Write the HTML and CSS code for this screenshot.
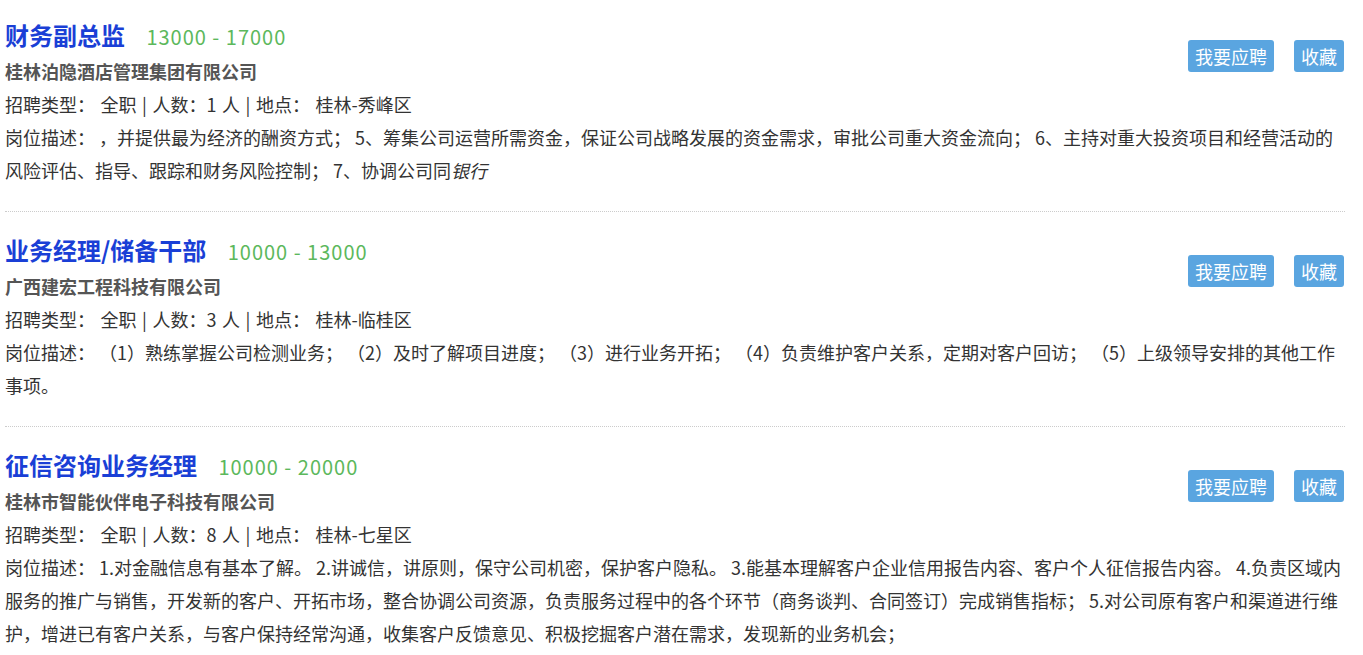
FILE: index.html
```html
<!DOCTYPE html>
<html lang="zh-CN">

<head>
    <meta charset="UTF-8">
    <meta name="viewport" content="width=device-width, initial-scale=1.0">
    <title>职位列表</title>
    <link rel="stylesheet" href="styles.css">
</head>

<body>
    <div class="job-list">
        <div class="job">
            <div class="actions">
                <a class="btn" href="#">我要应聘</a>
                <a class="btn" href="#">收藏</a>
            </div>
            <div class="job-title">
                <a href="#">财务副总监</a>
                <span class="salary">13000 - 17000</span>
            </div>
            <div class="company">桂林泊隐酒店管理集团有限公司</div>
            <div class="meta">招聘类型： 全职 | 人数：1 人 | 地点： 桂林-秀峰区</div>
            <div class="desc">岗位描述： ，并提供最为经济的酬资方式； 5、筹集公司运营所需资金，保证公司战略发展的资金需求，审批公司重大资金流向； 6、主持对重大投资项目和经营活动的风险评估、指导、跟踪和财务风险控制； 7、协调公司同<em>银行</em></div>
        </div>

        <div class="job">
            <div class="actions">
                <a class="btn" href="#">我要应聘</a>
                <a class="btn" href="#">收藏</a>
            </div>
            <div class="job-title">
                <a href="#">业务经理/储备干部</a>
                <span class="salary">10000 - 13000</span>
            </div>
            <div class="company">广西建宏工程科技有限公司</div>
            <div class="meta">招聘类型： 全职 | 人数：3 人 | 地点： 桂林-临桂区</div>
            <div class="desc">岗位描述： （1）熟练掌握公司检测业务； （2）及时了解项目进度； （3）进行业务开拓； （4）负责维护客户关系，定期对客户回访； （5）上级领导安排的其他工作事项。</div>
        </div>

        <div class="job">
            <div class="actions">
                <a class="btn" href="#">我要应聘</a>
                <a class="btn" href="#">收藏</a>
            </div>
            <div class="job-title">
                <a href="#">征信咨询业务经理</a>
                <span class="salary">10000 - 20000</span>
            </div>
            <div class="company">桂林市智能伙伴电子科技有限公司</div>
            <div class="meta">招聘类型： 全职 | 人数：8 人 | 地点： 桂林-七星区</div>
            <div class="desc">岗位描述： 1.对金融信息有基本了解。 2.讲诚信，讲原则，保守公司机密，保护客户隐私。 3.能基本理解客户企业信用报告内容、客户个人征信报告内容。 4.负责区域内服务的推广与销售，开发新的客户、开拓市场，整合协调公司资源，负责服务过程中的各个环节（商务谈判、合同签订）完成销售指标； 5.对公司原有客户和渠道进行维护，增进已有客户关系，与客户保持经常沟通，收集客户反馈意见、积极挖掘客户潜在需求，发现新的业务机会；</div>
        </div>
    </div>
</body>

</html>
```

FILE: styles.css
```css
body {
    margin: 0;
    font-family: "Noto Sans CJK SC", "Microsoft YaHei", sans-serif;
    font-size: 18px;
    color: #333;
    background: #fff;
}

.job-list {
    width: 1340px;
    padding: 0 5px;
}

.job {
    padding: 22px 0 24px;
    border-bottom: 1px dotted #ccc;
}

.job:first-child {
    padding-top: 19px;
}

.actions {
    float: right;
    display: flex;
    gap: 20px;
    margin-top: 21px;
    margin-right: 1px;
}

.btn {
    display: block;
    height: 32px;
    line-height: 32px;
    padding: 0 7px;
    font-size: 18px;
    color: #fff;
    background-color: #5aa5e0;
    border-radius: 3px;
    text-decoration: none;
}

.job-title {
    height: 36px;
    line-height: 32px;
    font-size: 24px;
}

.job-title a {
    font-weight: bold;
    color: #1a3fd6;
    text-decoration: none;
}

.salary {
    margin-left: 16px;
    font-size: 20px;
    line-height: 1;
    letter-spacing: 1px;
    color: #5cb85c;
}

.company {
    line-height: 33px;
    font-weight: bold;
    color: #555;
}

.meta,
.desc {
    line-height: 33px;
}

.meta {
    word-spacing: 1.5px;
}
```
